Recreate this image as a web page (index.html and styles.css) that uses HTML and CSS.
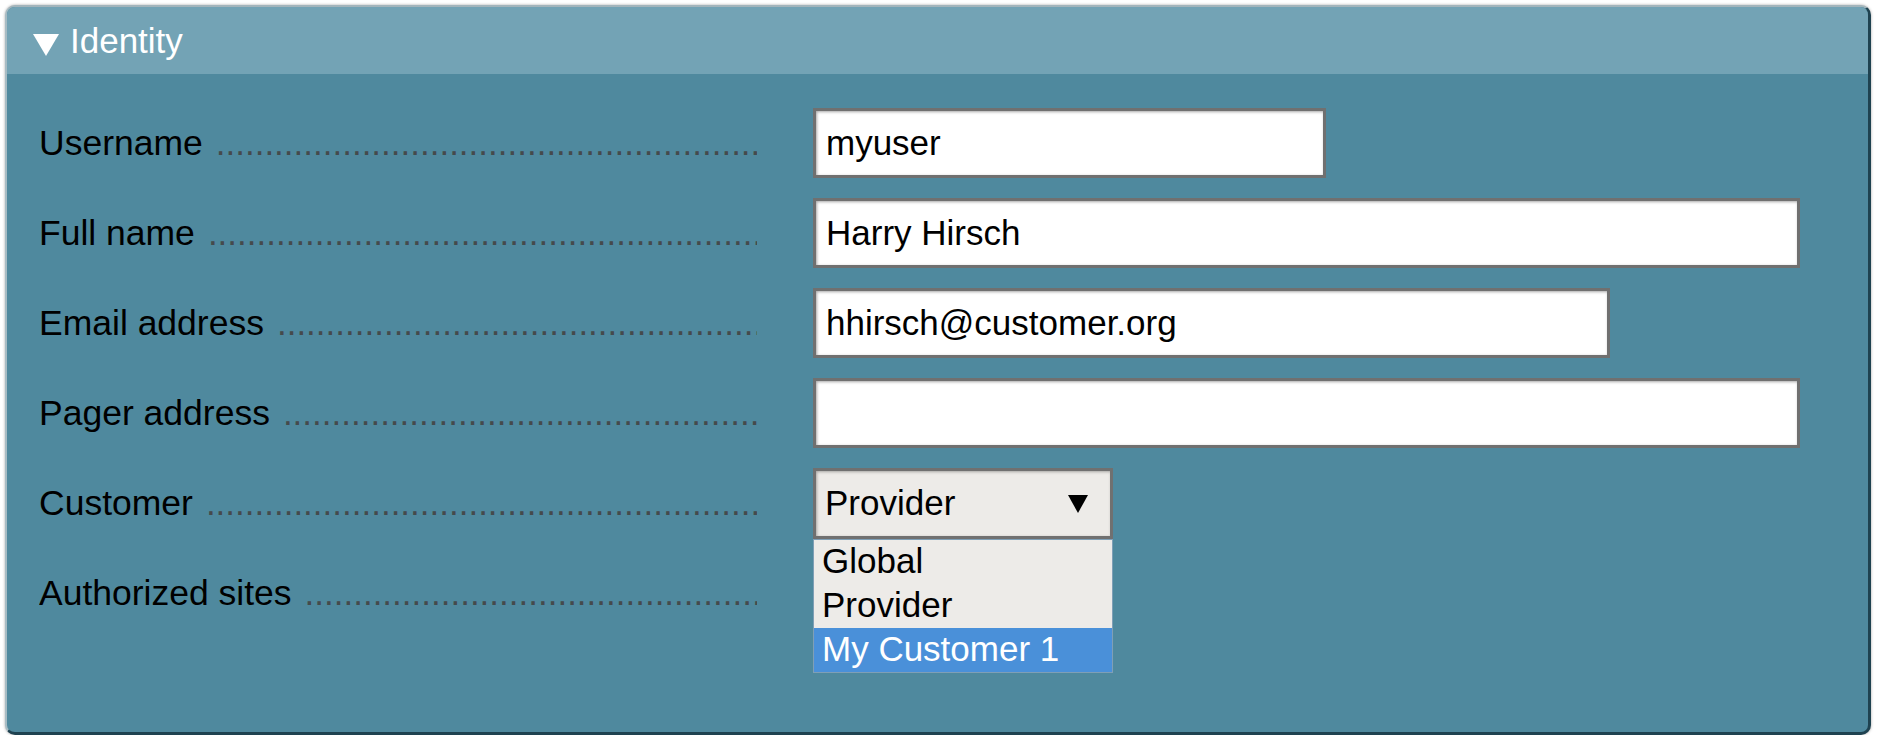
FILE: index.html
```html
<!DOCTYPE html>
<html>
<head>
<meta charset="utf-8">
<link rel="stylesheet" href="styles.css">
</head>
<body>
<div class="panel">
  <div class="panel-head">
    <svg class="head-arrow" width="26" height="22" viewBox="0 0 26 22"><polygon points="0,0 26,0 13,22" fill="#fff"/></svg>
    <span class="head-title">Identity</span>
  </div>
  <div class="panel-body">
    <div class="form">
      <div class="label"><span class="label-text">Username</span><span class="leader">........................................................................................................</span></div>
      <div class="value"><div class="input w-user">myuser</div></div>

      <div class="label"><span class="label-text">Full name</span><span class="leader">........................................................................................................</span></div>
      <div class="value"><div class="input w-full">Harry Hirsch</div></div>

      <div class="label"><span class="label-text">Email address</span><span class="leader">........................................................................................................</span></div>
      <div class="value"><div class="input w-email">hhirsch@customer.org</div></div>

      <div class="label"><span class="label-text">Pager address</span><span class="leader">........................................................................................................</span></div>
      <div class="value"><div class="input w-full"></div></div>

      <div class="label"><span class="label-text">Customer</span><span class="leader">........................................................................................................</span></div>
      <div class="value">
        <div class="select-wrap">
          <div class="select">
            <span>Provider</span>
            <svg class="select-arrow" width="20" height="18" viewBox="0 0 20 18"><polygon points="0,0 20,0 10,18" fill="#000"/></svg>
          </div>
          <div class="dropdown">
            <div class="option">Global</div>
            <div class="option">Provider</div>
            <div class="option selected">My Customer 1</div>
          </div>
        </div>
      </div>

      <div class="label"><span class="label-text">Authorized sites</span><span class="leader">........................................................................................................</span></div>
      <div class="value"><div class="empty"></div></div>
    </div>
  </div>
</div>
</body>
</html>
```

FILE: styles.css
```css
html, body {
  margin: 0;
  padding: 0;
  background: #ffffff;
}

body {
  font-family: "Liberation Sans", Arial, sans-serif;
}

.panel {
  margin: 5px 6px 0 5px;
  border-radius: 10px;
  border-top: 2px solid #a3b5bc;
  border-left: 2px solid #a7bcc4;
  border-right: 3px solid #1f4250;
  border-bottom: 3px solid #1f4250;
  box-shadow: 0 0 3px rgba(0, 0, 0, 0.35);
  background: #4f899e;
}

.panel-head {
  height: 67px;
  background: #73a3b5;
  border-radius: 8px 8px 0 0;
  display: flex;
  align-items: center;
  padding-left: 26px;
}

.head-arrow {
  display: block;
  margin-top: 8px;
}

.head-title {
  color: #ffffff;
  font-size: 35px;
  margin-left: 11px;
}

.panel-body {
  padding: 34px 0 104px 32px;
}

.form {
  display: grid;
  grid-template-columns: 718px 1fr;
  column-gap: 56px;
  row-gap: 20px;
  grid-auto-rows: 70px;
}

.label {
  display: flex;
  align-items: center;
  font-size: 35.5px;
  color: #000;
  min-width: 0;
  overflow: hidden;
}

.label-text {
  white-space: nowrap;
  flex: none;
}

.leader {
  flex: 1;
  min-width: 0;
  margin-left: 13px;
  white-space: nowrap;
  overflow: hidden;
  color: #454a4c;
  font-size: 35px;
}

.value {
  display: flex;
  align-items: center;
}

.input {
  box-sizing: border-box;
  height: 70px;
  border: 3px solid #707070;
  background: #ffffff;
  box-shadow: inset 1px 1px 3px rgba(0, 0, 0, 0.35);
  font-size: 35px;
  color: #000;
  padding-left: 10px;
  display: flex;
  align-items: center;
  white-space: nowrap;
}

.w-user { width: 513px; }
.w-full { width: 987px; }
.w-email { width: 797px; }

.select-wrap {
  position: relative;
  width: 300px;
}

.select {
  box-sizing: border-box;
  width: 300px;
  height: 71px;
  border: 3px solid #707070;
  background: #edebe8;
  box-shadow: inset 1px 1px 3px rgba(0, 0, 0, 0.3);
  font-size: 35px;
  color: #000;
  padding: 0 22px 0 9px;
  display: flex;
  align-items: center;
  justify-content: space-between;
}

.select-arrow {
  display: block;
  margin-top: 2px;
}

.dropdown {
  position: absolute;
  top: 71px;
  left: 0;
  width: 300px;
  box-sizing: border-box;
  border: 1px solid #7f9fb6;
  background: #edebe8;
  z-index: 2;
}

.option {
  height: 44px;
  line-height: 41px;
  font-size: 35px;
  padding-left: 8px;
  color: #000;
  white-space: nowrap;
}

.option.selected {
  background: #4a90d9;
  color: #ffffff;
}

.empty {
  height: 70px;
}
```
